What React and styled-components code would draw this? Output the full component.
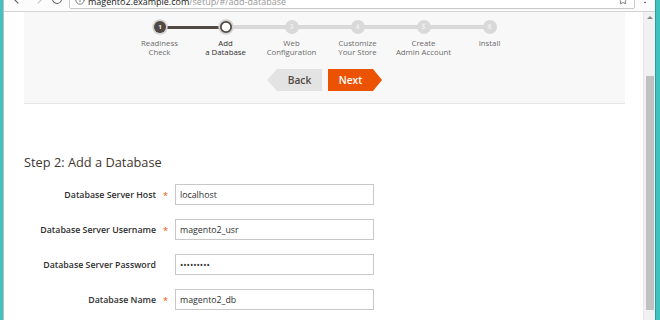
import React from 'react'
import styled, { createGlobalStyle } from 'styled-components'
import { ArrowLeft, ArrowRight, RotateCw, Info, Star, MoreVertical } from 'lucide-react'

const GlobalStyle = createGlobalStyle`
  html, body {
    margin: 0;
    padding: 0;
    overflow: hidden;
    background: #ffffff;
    font-family: "Open Sans", "Noto Sans", sans-serif;
  }
  * { box-sizing: border-box; }
`

const Frame = styled.div`
  display: flex;
  width: 660px;
  height: 320px;
  overflow: hidden;
`

const TealEdge = styled.div`
  width: ${p => p.w}px;
  flex: none;
  background: #40c2c0;
  border-${p => p.side}: 1px solid ${p => p.line};
`

const Window = styled.div`
  flex: 1;
  display: flex;
  flex-direction: column;
  min-width: 0;
`

const Toolbar = styled.div`
  height: 12px;
  flex: none;
  overflow: hidden;
  background: #fcfcfc;
  border-bottom: 1px solid #d3d3d3;
`

const ToolbarRow = styled.div`
  display: flex;
  align-items: center;
  height: 24px;
  margin-top: -15px;
  padding-left: 4px;
  color: #5f6368;
`

const NavIcon = styled.span`
  display: flex;
  width: ${p => p.w || 20}px;
  justify-content: center;
  padding-top: 3px;
  color: ${p => (p.disabled ? '#c4c4c4' : '#5f6368')};
`

const Omnibox = styled.div`
  flex: 1;
  height: 23px;
  margin-left: 3px;
  display: flex;
  align-items: flex-end;
  gap: 3px;
  padding: 0 6px 1px 5px;
  background: #ffffff;
  border: 1px solid #c9c9c9;
  border-radius: 2px;
  font-size: 9px;
  line-height: 11px;
  color: #9a9a9a;
  white-space: nowrap;

  svg { margin-bottom: 2px; }
`

const Host = styled.span`
  color: #202020;
`

const Url = styled.span`
  flex: 1;
`

const MenuDots = styled.span`
  display: flex;
  width: 20px;
  justify-content: center;
  padding-top: 4px;
  color: #5f6368;
`

const Body = styled.div`
  flex: 1;
  display: flex;
  min-height: 0;
`

const Page = styled.div`
  flex: 1;
  padding: 0 18px 0 20px;
  background: #ffffff;
`

const Scrollbar = styled.div`
  width: 12px;
  flex: none;
  display: flex;
  flex-direction: column;
  align-items: center;
  background: #f1f1f1;
  border-left: 1px solid #e8e8e8;
`

const ScrollArrow = styled.div`
  margin-top: 4px;
  width: 0;
  height: 0;
  border-left: 3px solid transparent;
  border-right: 3px solid transparent;
  border-bottom: 3px solid #8a8a8a;
`

const ScrollThumb = styled.div`
  margin-top: 57px;
  width: 8px;
  height: 234px;
  background: #c1c1c1;
`

const Panel = styled.div`
  background: #f8f8f8;
  border-bottom: 1px solid #e6e6e6;
  padding: 8px 0 12px;
  display: flex;
  flex-direction: column;
  align-items: center;
`

const Steps = styled.div`
  display: flex;
  justify-content: center;
`

const Step = styled.div`
  position: relative;
  width: 66px;
  display: flex;
  flex-direction: column;
  align-items: center;

  &::before {
    content: '';
    display: ${p => (p.first ? 'none' : 'block')};
    position: absolute;
    top: ${p => (p.status === 'pending' ? 5 : 5.5)}px;
    left: -33px;
    width: 66px;
    height: ${p => (p.status === 'pending' ? 4 : 3)}px;
    background: ${p => (p.status === 'pending' ? '#d9d9d9' : '#514943')};
  }
`

const Dot = styled.div`
  position: relative;
  z-index: 1;
  width: 14px;
  height: 14px;
  border-radius: 50%;
  display: flex;
  align-items: center;
  justify-content: center;
  font-size: 6.5px;
  font-weight: 700;
  line-height: 1;
  background: ${p => (p.status === 'done' ? '#514943' : p.status === 'active' ? '#ffffff' : '#d9d9d9')};
  color: ${p => (p.status === 'done' ? '#ffffff' : '#efefef')};
  border: ${p => (p.status === 'active' ? '2.5px solid #514943' : 'none')};
  box-shadow: ${p => (p.status === 'pending' ? 'none' : '0 0 0 2px #d3d3d3')};
  transform: scale(${p => (p.status === 'pending' ? 1 : 0.86)});
`

const StepLabel = styled.div`
  margin-top: 5px;
  font-size: 7.8px;
  line-height: 9px;
  text-align: center;
  white-space: nowrap;
  color: ${p => (p.status === 'active' ? '#303030' : '#6b6b6b')};
`

const Buttons = styled.div`
  display: flex;
  gap: 6px;
  margin-top: 12px;
`

const NavButton = styled.button`
  height: 22px;
  width: ${p => (p.kind === 'back' ? 55 : 54)}px;
  border: none;
  font-family: inherit;
  font-size: 10.2px;
  font-weight: 600;
  cursor: pointer;
  background: ${p => (p.kind === 'back' ? '#e3e3e3' : '#eb5202')};
  color: ${p => (p.kind === 'back' ? '#514943' : '#ffffff')};
  padding: ${p => (p.kind === 'back' ? '0 0 0 10px' : '0 9px 0 0')};
  clip-path: ${p =>
    p.kind === 'back'
      ? 'polygon(10px 0, 100% 0, 100% 100%, 10px 100%, 0 50%)'
      : 'polygon(0 0, calc(100% - 9px) 0, 100% 50%, calc(100% - 9px) 100%, 0 100%)'};
`

const Title = styled.h2`
  margin: 50px 0 0;
  font-size: 12.8px;
  line-height: 17px;
  font-weight: 400;
  color: #41362f;
`

const Form = styled.div`
  display: grid;
  grid-template-columns: 132px 19px 199px;
  row-gap: 14px;
  align-items: center;
  margin-top: 13px;
`

const FieldLabel = styled.label`
  text-align: right;
  font-size: 8.8px;
  font-weight: 600;
  color: #303030;
  white-space: nowrap;
`

const Required = styled.span`
  text-align: center;
  font-size: 9px;
  color: #eb5202;
  padding-top: 1px;
`

const TextInput = styled.input`
  width: 199px;
  height: 21px;
  padding: 0 5px 0 4px;
  border: 1px solid #c8c8c8;
  border-radius: 0;
  font-family: inherit;
  font-size: 8.8px;
  color: #303030;
  background: #ffffff;
  outline: none;
`

const steps = [
  { n: 1, label: ['Readiness', 'Check'], status: 'done' },
  { n: 2, label: ['Add', 'a Database'], status: 'active' },
  { n: 3, label: ['Web', 'Configuration'], status: 'pending' },
  { n: 4, label: ['Customize', 'Your Store'], status: 'pending' },
  { n: 5, label: ['Create', 'Admin Account'], status: 'pending' },
  { n: 6, label: ['Install'], status: 'pending' },
]

const fields = [
  { label: 'Database Server Host', value: 'localhost', required: true },
  { label: 'Database Server Username', value: 'magento2_usr', required: true },
  { label: 'Database Server Password', value: 'secretpw1', required: false, type: 'password' },
  { label: 'Database Name', value: 'magento2_db', required: true },
]

export default function App() {
  return (
    <>
      <GlobalStyle />
      <Frame>
        <TealEdge w={4} side="right" line="#bdbdbd" />
        <Window>
          <Toolbar>
            <ToolbarRow>
              <NavIcon><ArrowLeft size={14} strokeWidth={2} /></NavIcon>
              <NavIcon disabled><ArrowRight size={14} strokeWidth={2} /></NavIcon>
              <NavIcon w={18}><RotateCw size={12} strokeWidth={2.2} /></NavIcon>
              <Omnibox>
                <Info size={10} color="#5f6368" />
                <Url><Host>magento2.example.com</Host>/setup/#/add-database</Url>
                <Star size={10} color="#5f6368" />
              </Omnibox>
              <MenuDots><MoreVertical size={12} /></MenuDots>
            </ToolbarRow>
          </Toolbar>
          <Body>
            <Page>
              <Panel>
                <Steps>
                  {steps.map((s, i) => (
                    <Step key={s.n} status={s.status} first={i === 0}>
                      <Dot status={s.status}>{s.status === 'active' ? '' : s.n}</Dot>
                      <StepLabel status={s.status}>
                        {s.label.map(l => <div key={l}>{l}</div>)}
                      </StepLabel>
                    </Step>
                  ))}
                </Steps>
                <Buttons>
                  <NavButton kind="back">Back</NavButton>
                  <NavButton kind="next">Next</NavButton>
                </Buttons>
              </Panel>
              <Title>Step 2: Add a Database</Title>
              <Form>
                {fields.map(f => (
                  <React.Fragment key={f.label}>
                    <FieldLabel>{f.label}</FieldLabel>
                    <Required>{f.required ? '*' : ''}</Required>
                    <TextInput type={f.type || 'text'} value={f.value} readOnly />
                  </React.Fragment>
                ))}
              </Form>
            </Page>
            <Scrollbar>
              <ScrollArrow />
              <ScrollThumb />
            </Scrollbar>
          </Body>
        </Window>
        <TealEdge w={5} side="left" line="#2b9f9d" />
      </Frame>
    </>
  )
}
